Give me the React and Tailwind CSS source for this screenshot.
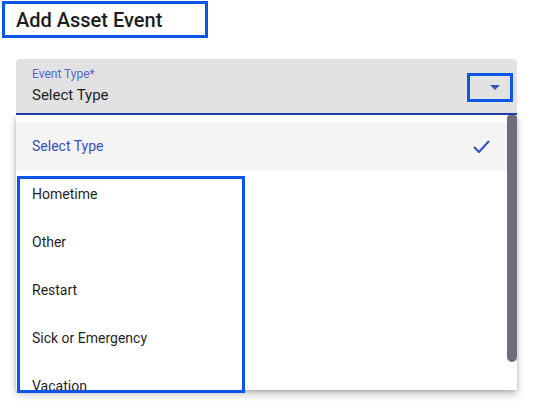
import React from "react";

const options = ["Hometime", "Other", "Restart", "Sick or Emergency", "Vacation"];

export default function App() {
  return (
    <div className="relative w-[537px] h-[408px] overflow-hidden bg-white font-['Roboto',sans-serif]">
      <div className="ml-[2px] mt-[1px] w-[206px] h-[37px] border-[3px] border-[#0b55e8] pl-[11px] flex items-center">
        <h1 className="text-[20px] leading-none font-medium text-[#1d1d1d]">Add Asset Event</h1>
      </div>

      <div className="ml-[16px] mt-[21px] w-[501px]">
        <div className="relative bg-[#e2e2e2] rounded-t-[4px] border-b-2 border-[#1f3fb3] pl-[16px] pt-[7px] pb-[8px]">
          <div className="text-[12px] leading-[16px] text-[#5467cf]">Event Type*</div>
          <div className="mt-[3px] text-[15px] leading-[20px] text-[#1f1f1f]">Select Type</div>
          <div className="absolute right-[4px] top-[14px] w-[46px] h-[29px] border-[3px] border-[#0b55e8] flex items-center justify-end pr-[10px]">
            <svg width="10" height="5" viewBox="0 0 10 5">
              <path d="M0 0 L10 0 L5 5 Z" fill="#3a4fc0" />
            </svg>
          </div>
        </div>

        <div className="relative">
          <div className="relative h-[275px] overflow-hidden bg-white shadow-[0_4px_8px_rgba(0,0,0,0.25),0_1px_3px_rgba(0,0,0,0.15)] pt-[7px]">
            <div className="h-[48px] bg-[#f4f4f4] flex items-center justify-between pl-[16px] pr-[27px]">
              <span className="text-[14px] text-[#3b4fc4]">Select Type</span>
              <svg width="17" height="13" viewBox="0 0 17 13">
                <path d="M1 7 L6 12 L16 1" fill="none" stroke="#2f4fc6" strokeWidth="2" />
              </svg>
            </div>
            {options.map((o) => (
              <div key={o} className="h-[48px] flex items-center pl-[16px] text-[14px] text-[#1f1f1f]">
                {o}
              </div>
            ))}
            <div className="absolute right-0 top-0 w-[10px] h-[247px] bg-[#6e6c7b] rounded-b-[5px] rounded-t-[3px]" />
          </div>
          <div className="absolute left-[1px] top-[61px] w-[228px] h-[217px] border-[3px] border-[#0b55e8]" />
        </div>
      </div>
    </div>
  );
}
